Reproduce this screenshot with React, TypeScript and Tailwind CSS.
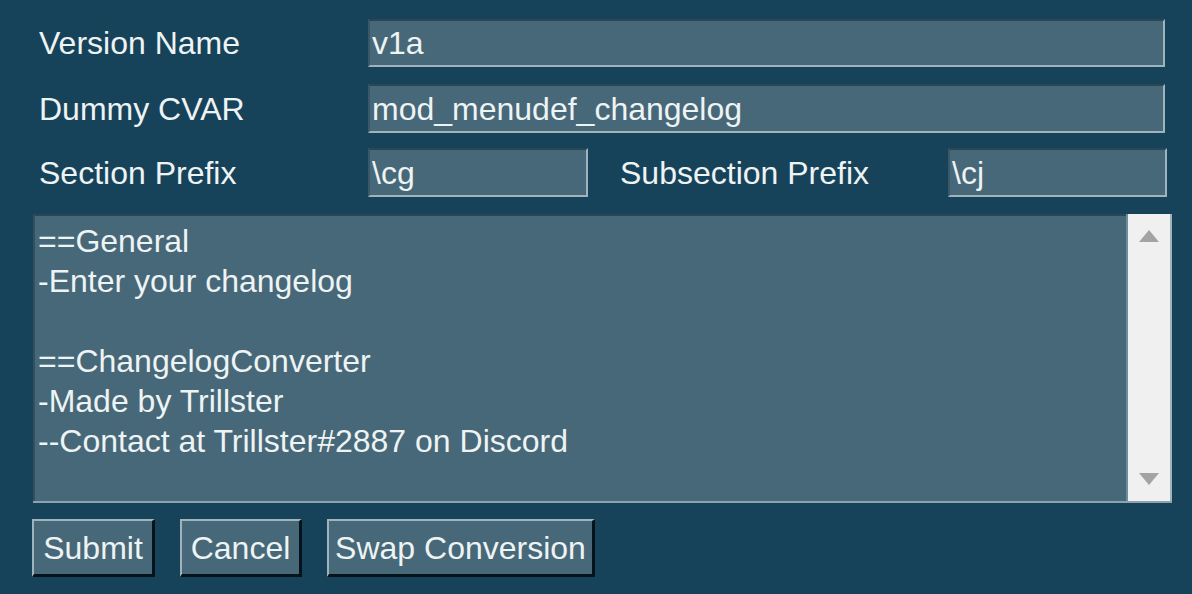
import React from "react";

const font = { fontFamily: '"Liberation Sans", Arial, sans-serif' };

function Field({ value, className }: { value: string; className: string }) {
  return (
    <div
      className={`flex items-center border-2 border-t-[#2b4754] border-l-[#3a5867] border-b-[#9fb3bc] border-r-[#9fb3bc] bg-[#476878] pl-[2px] text-[32px] leading-none text-[#eef3f4] ${className}`}
    >
      {value}
    </div>
  );
}

function Btn({ label, className }: { label: string; className: string }) {
  return (
    <div
      className={`flex items-center justify-center border-t-2 border-l-2 border-b-[3px] border-r-[3px] border-t-[#9fb3bc] border-l-[#9fb3bc] border-b-[#07131a] border-r-[#07131a] bg-[#476878] text-[32px] leading-none text-[#eef3f4] ${className}`}
    >
      {label}
    </div>
  );
}

export default function App() {
  const lines = [
    "==General",
    "-Enter your changelog",
    "",
    "==ChangelogConverter",
    "-Made by Trillster",
    "--Contact at Trillster#2887 on Discord",
  ];
  return (
    <div
      style={font}
      className="flex h-[594px] w-[1192px] flex-col bg-[#17435a] pt-[19px] text-[#eef3f4]"
    >
      <div className="flex h-[48px] items-center pl-[39px]">
        <div className="w-[329px] text-[32px] leading-none">Version Name</div>
        <Field value="v1a" className="h-[48px] w-[797px]" />
      </div>
      <div className="mt-[17px] flex h-[49px] items-center pl-[39px]">
        <div className="w-[329px] text-[32px] leading-none">Dummy CVAR</div>
        <Field value="mod_menudef_changelog" className="h-[49px] w-[797px]" />
      </div>
      <div className="mt-[15px] flex h-[49px] items-center pl-[39px]">
        <div className="w-[329px] text-[32px] leading-none">Section Prefix</div>
        <Field value="\cg" className="h-[49px] w-[220px]" />
        <div className="ml-[32px] w-[328px] text-[32px] leading-none">Subsection Prefix</div>
        <Field value="\cj" className="h-[49px] w-[219px]" />
      </div>
      <div className="ml-[33px] mt-[17px] flex h-[289px] w-[1139px] border-b-2 border-b-[#8ca3ad]">
        <div className="flex-1 border-l-2 border-t-2 border-l-[#34505e] border-t-[#2b4754] bg-[#476878] pl-[3px] pt-[5px] text-[32px] leading-[40px] text-[#eef3f4]">
          {lines.map((l, i) => (
            <div key={i} className="h-[40px] whitespace-pre">
              {l}
            </div>
          ))}
        </div>
        <div className="flex w-[46px] flex-col justify-between border-l-2 border-r-2 border-l-[#6f8c98] border-r-[#9fb3bc] bg-[#f0f0f0] py-[15px]">
          <svg width="42" height="14" viewBox="0 0 42 14">
            <polygon points="11,13 21,1 31,13" fill="#a3a3a3" />
          </svg>
          <svg width="42" height="14" viewBox="0 0 42 14">
            <polygon points="11,1 31,1 21,13" fill="#a3a3a3" />
          </svg>
        </div>
      </div>
      <div className="ml-[32px] mt-[16px] flex h-[58px] gap-[25px]">
        <Btn label="Submit" className="h-[58px] w-[123px]" />
        <Btn label="Cancel" className="h-[58px] w-[122px]" />
        <Btn label="Swap Conversion" className="h-[58px] w-[268px]" />
      </div>
    </div>
  );
}
